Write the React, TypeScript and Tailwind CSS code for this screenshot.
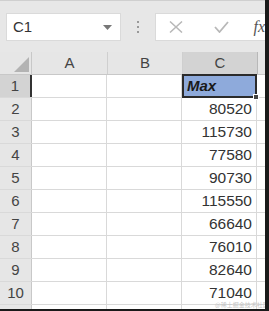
import React from "react";

const values = [80520, 115730, 77580, 90730, 115550, 66640, 76010, 82640, 71040];

const font = { fontFamily: '"Liberation Sans", Arial, sans-serif' };

const App = () => {
  return (
    <div
      className="relative w-[269px] h-[311px] overflow-hidden bg-white border-r-4 border-b-2 border-[#1a1a1a] flex flex-col text-[#333]"
      style={font}
    >
      {/* Toolbar */}
      <div className="h-[52px] shrink-0 bg-[#e7e7e7] border-t border-[#cfcfcf] flex items-start pt-[12px] pl-[6px]">
        <div className="w-[119px] h-[28px] bg-white border border-[#dadada] flex items-center justify-between pl-[6px] pr-[8px]">
          <span className="text-[15px] text-[#333]">C1</span>
          <svg width="9" height="5" viewBox="0 0 9 5">
            <path d="M0 0 L9 0 L4.5 5 Z" fill="#777" />
          </svg>
        </div>
        <div className="w-[36px] h-[28px] flex flex-col items-center justify-center gap-[3px]">
          <span className="w-[2px] h-[2px] bg-[#999]" />
          <span className="w-[2px] h-[2px] bg-[#999]" />
          <span className="w-[2px] h-[2px] bg-[#999]" />
        </div>
        <div className="flex-1 h-[28px] bg-white border border-[#dadada] border-r-0 flex items-center pl-[13px]">
          <svg width="14" height="12" viewBox="0 0 14 12">
            <path d="M1 0.5 L13 11.5 M13 0.5 L1 11.5" stroke="#b8b8b8" strokeWidth="1.5" />
          </svg>
          <svg width="15" height="12" viewBox="0 0 15 12" className="ml-[31px]">
            <path d="M1 6 L5.5 11 L14 1" stroke="#b8b8b8" strokeWidth="1.8" fill="none" />
          </svg>
          <span
            className="ml-[24px] text-[16px] italic text-[#555]"
            style={{ fontFamily: '"Liberation Serif", serif' }}
          >
            fx
          </span>
        </div>
      </div>

      {/* Column headers */}
      <div className="h-[23px] shrink-0 flex bg-[#e6e6e6] border-b border-[#c8c8c8]">
        <div className="w-[32px] shrink-0 border-r border-[#c8c8c8] flex items-end justify-end pr-[2px] pb-[2px]">
          <svg width="15" height="15" viewBox="0 0 15 15">
            <path d="M15 0 L15 15 L0 15 Z" fill="#b3b3b3" />
          </svg>
        </div>
        <div className="w-[76px] shrink-0 border-r border-[#cfcfcf] flex items-center justify-center text-[15px] text-[#444]">
          A
        </div>
        <div className="w-[75px] shrink-0 border-r border-[#cfcfcf] flex items-center justify-center text-[15px] text-[#444]">
          B
        </div>
        <div className="w-[75px] shrink-0 border-r border-[#b8b8b8] bg-[#d3d3d3] flex items-center justify-center text-[15px] text-[#444]">
          C
        </div>
        <div className="flex-1" />
      </div>

      {/* Rows */}
      {["Max", ...values, ""].map((v, i) => {
        const first = i === 0;
        return (
          <div key={i} className="h-[23px] shrink-0 flex border-b border-[#d9d9d9]">
            <div
              className={
                first
                  ? "w-[32px] shrink-0 bg-[#d3d3d3] border-r-2 border-[#333] flex items-center justify-center text-[15px] text-[#444]"
                  : "w-[32px] shrink-0 bg-[#e6e6e6] border-r border-[#c8c8c8] flex items-center justify-center text-[15px] text-[#444]"
              }
            >
              {i + 1}
            </div>
            <div className="w-[75px] shrink-0 border-r border-[#d9d9d9]" />
            <div className="w-[75px] shrink-0 border-r border-[#d9d9d9]" />
            {first ? (
              <div className="relative w-[75px] shrink-0 bg-[#8eaadb] border-2 border-[#2b2b2b] -my-px flex items-center pl-[3px] text-[15px] font-bold italic text-[#1a1a1a]">
                Max
                <span className="absolute -right-[4px] -bottom-[4px] w-[6px] h-[6px] bg-[#444] border border-white" />
              </div>
            ) : (
              <div className="w-[75px] shrink-0 border-r border-[#d9d9d9] flex items-center justify-end pr-[4px] text-[15.5px] text-[#333]">
                {v}
              </div>
            )}
            <div className="flex-1" />
          </div>
        );
      })}

      <div
        className="absolute left-[215px] top-[302px] text-[6px] leading-[6px] text-[#c4c4c4] whitespace-nowrap"
        style={{ fontFamily: '"Noto Sans CJK SC", sans-serif' }}
      >
        @稀土掘金技术社区
      </div>
    </div>
  );
};

export default App;
